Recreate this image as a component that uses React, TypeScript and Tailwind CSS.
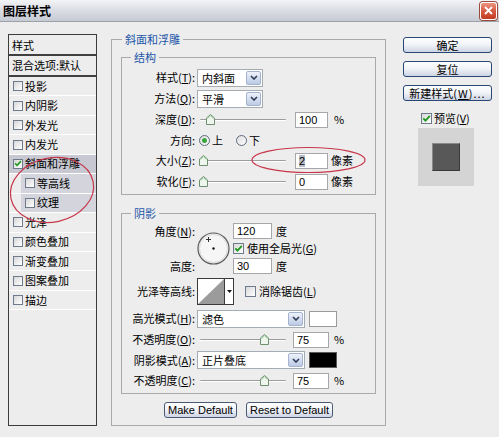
import React from 'react';

const U = ({ c }: { c: string }) => <span className="underline">{c}</span>;

const Check = ({ on = false, className = '' }: { on?: boolean; className?: string }) => (
  <span
    className={`inline-flex h-[11px] w-[11px] shrink-0 items-center justify-center border border-[#6d7b8d] bg-gradient-to-br from-[#d8d8d8] to-white ${className}`}
  >
    {on && (
      <svg width="9" height="9" viewBox="0 0 9 9">
        <path d="M1.3 4.3 L3.5 6.6 L7.8 1.8" fill="none" stroke="#1f9a1f" strokeWidth="1.8" />
      </svg>
    )}
  </span>
);

const Radio = ({ on = false }: { on?: boolean }) => (
  <span className="inline-flex h-[11px] w-[11px] shrink-0 items-center justify-center rounded-full border border-[#5d6b7d] bg-gradient-to-br from-[#dcdcdc] to-white">
    {on && <span className="h-[5px] w-[5px] rounded-full bg-[#3aa53a]" />}
  </span>
);

const Select = ({ w, value }: { w: string; value: string }) => (
  <div className={`flex h-[18px] border border-[#a5acb2] bg-white ${w}`}>
    <div className="flex-1 pl-[4px] leading-[16px]">{value}</div>
    <div className="m-[1px] flex w-[15px] items-center justify-center rounded-[2px] border border-[#a3b3d0] bg-gradient-to-b from-[#eef2fa] to-[#bccae4]">
      <svg width="8" height="5" viewBox="0 0 8 5">
        <path d="M1 1 L4 4 L7 1" fill="none" stroke="#2d3b55" strokeWidth="1.6" />
      </svg>
    </div>
  </div>
);

const Field = ({ w = 'w-[33px]', className = '', children }: { w?: string; className?: string; children: React.ReactNode }) => (
  <div
    className={`h-[16px] border border-[#a7a6aa] bg-white pl-[3px] font-['Liberation_Sans',sans-serif] text-[11px] leading-[14px] ${w} ${className}`}
  >
    {children}
  </div>
);

// thumb positions are passed as complete class names
const Slider = ({ thumb }: { thumb: string }) => (
  <div className="relative ml-[3px] h-[12px] w-[86px]">
    <div className="mt-[5px] h-[2px] rounded-full border-t border-b border-t-[#9c9c9c] border-b-white" />
    <svg className={`absolute top-0 ${thumb}`} width="9" height="11" viewBox="0 0 9 11">
      <path d="M0.5 4 L4.5 0.5 L8.5 4 V10.5 H0.5 Z" fill="#eef6ee" stroke="#6f8f70" strokeWidth="1" />
      <path d="M1.5 4.5 L4.5 1.8 L7.5 4.5" fill="none" stroke="#9ccf9c" strokeWidth="1" />
    </svg>
  </div>
);

const Row = ({ label, h = 'h-[21px]', children }: { label: React.ReactNode; h?: string; children?: React.ReactNode }) => (
  <div className={`flex items-center ${h}`}>
    <div className="w-[73px] shrink-0 text-right">{label}</div>
    <div className="ml-[2px] flex items-center">{children}</div>
  </div>
);

const Btn = ({ className = '', children }: { className?: string; children: React.ReactNode }) => (
  <div
    className={`h-[16px] rounded-[3px] border border-[#284772] bg-gradient-to-b from-white via-[#f0f2f7] to-[#cdd4e4] text-center leading-[14px] ${className}`}
  >
    {children}
  </div>
);

const sideItems = ['投影', '内阴影', '外发光', '内发光'];
const sideRest = ['光泽', '颜色叠加', '渐变叠加', '图案叠加', '描边'];

const SideRow = ({ label, on = false, sub = false, active = false }: { label: string; on?: boolean; sub?: boolean; active?: boolean }) => (
  <div className={`flex h-[19.45px] border-b border-white ${active ? 'bg-[#c7c8d2]' : ''}`}>
    <div className={`flex flex-1 items-center ${sub ? 'ml-[12px] bg-[#d3d4dc] pl-[4px]' : 'pl-[4px]'}`}>
      <Check on={on} className="!h-[10px] !w-[10px]" />
      <span className="ml-[2px] leading-none">{label}</span>
    </div>
  </div>
);

export default function App() {
  return (
    <div className="relative h-[437px] w-[499px] overflow-hidden bg-[#ededed] font-['Noto_Sans_CJK_SC',sans-serif] text-[11px] text-black">
      {/* title bar */}
      <div className="flex h-[22px] items-center justify-between border-b border-[#9da1aa] bg-gradient-to-b from-[#f3f4f7] via-[#dadde4] to-[#c6cad3] pl-[3px] pr-[2px]">
        <span className="text-[12px] font-bold">图层样式</span>
        <div className="flex h-[18px] w-[17px] items-center justify-center rounded-[3px] border border-white bg-gradient-to-b from-[#eb9480] via-[#d85a42] to-[#c13a22] shadow-[0_0_0_1px_#9a4a3c]">
          <svg width="9" height="9" viewBox="0 0 9 9">
            <path d="M1 1 L8 8 M8 1 L1 8" stroke="white" strokeWidth="1.8" />
          </svg>
        </div>
      </div>

      <div className="flex">
        {/* style list */}
        <div className="ml-[8px] mt-[12px] h-[392px] w-[89px] border border-[#3c3c3c] bg-[#ededed]">
          <div className="h-[21px] border-b-2 border-[#404040] pl-[3px] leading-[20px]">样式</div>
          <div className="h-[21px] border-b-2 border-[#404040] pl-[3px] leading-[19px]">混合选项:默认</div>
          {sideItems.map((s) => (
            <SideRow key={s} label={s} />
          ))}
          <SideRow label="斜面和浮雕" on active />
          <SideRow label="等高线" sub />
          <SideRow label="纹理" sub />
          {sideRest.map((s) => (
            <SideRow key={s} label={s} />
          ))}
        </div>

        {/* bevel and emboss */}
        <fieldset className="ml-[14px] mt-[9px] w-[275px] border border-[#a9a9a9] px-[9px] pb-[6px]">
          <legend className="ml-[1px] px-[3px] leading-[16px] text-[#2457a8]">斜面和浮雕</legend>

          <fieldset className="mt-[2px] border border-[#a9a9a9] pb-[2px] pt-[2px]">
            <legend className="ml-[9px] px-[3px] leading-[16px] text-[#2457a8]">结构</legend>
            <Row label={<>样式(<U c="T" />):</>}>
              <Select w="w-[66px]" value="内斜面" />
            </Row>
            <Row label={<>方法(<U c="Q" />):</>}>
              <Select w="w-[66px]" value="平滑" />
            </Row>
            <Row label={<>深度(<U c="D" />):</>}>
              <Slider thumb="left-[6px]" />
              <Field className="ml-[9px]">100</Field>
              <span className="ml-[6px]">%</span>
            </Row>
            <Row h="h-[20px]" label="方向:">
              <span className="ml-[2px] flex items-center">
                <Radio on />
                <span className="ml-[2px]">上</span>
              </span>
              <span className="ml-[13px] flex items-center">
                <Radio />
                <span className="ml-[2px]">下</span>
              </span>
            </Row>
            <Row label={<>大小(<U c="Z" />):</>}>
              <Slider thumb="left-[-1px]" />
              <Field className="ml-[9px]">
                <span className="bg-[#b9bdc7]">2</span>
              </Field>
              <span className="ml-[3px]">像素</span>
            </Row>
            <Row label={<>软化(<U c="F" />):</>}>
              <Slider thumb="left-[-1px]" />
              <Field className="ml-[9px]">0</Field>
              <span className="ml-[3px]">像素</span>
            </Row>
          </fieldset>

          <fieldset className="mt-[10px] border border-[#a9a9a9] pb-[2px] pt-[1px]">
            <legend className="ml-[9px] px-[3px] leading-[16px] text-[#2457a8]">阴影</legend>
            <div className="flex">
              <div className="w-[73px] shrink-0">
                <div className="flex h-[18px] items-center justify-end">
                  角度(<U c="N" />):
                </div>
                <div className="h-[17px]" />
                <div className="flex h-[18px] items-center justify-end">高度:</div>
              </div>
              <div className="ml-[2px] pt-[10px]">
                <svg width="33" height="33" viewBox="0 0 33 33">
                  <circle cx="16.5" cy="16.5" r="15.5" fill="#f6f6f6" stroke="#5a5a5a" strokeWidth="1.2" />
                  <circle cx="16.5" cy="16.5" r="14" fill="none" stroke="#d8d8d8" strokeWidth="1" />
                  <circle cx="16.5" cy="16.5" r="1.2" fill="#111" />
                  <path d="M9 7.5 H14 M11.5 5 V10" stroke="#333" strokeWidth="1" />
                </svg>
              </div>
              <div className="ml-[3px]">
                <div className="flex h-[18px] items-center">
                  <Field w="w-[39px]">120</Field>
                  <span className="ml-[4px]">度</span>
                </div>
                <div className="flex h-[17px] items-center">
                  <Check on />
                  <span className="ml-[3px]">
                    使用全局光(<U c="G" />)
                  </span>
                </div>
                <div className="flex h-[18px] items-center">
                  <Field w="w-[39px]">30</Field>
                  <span className="ml-[4px]">度</span>
                </div>
              </div>
            </div>
            <Row h="my-[3px] h-[27px]" label="光泽等高线:">
              <div className="flex h-[27px] w-[37px] border border-[#3a3a3a] bg-white">
                <svg width="26" height="25" viewBox="0 0 26 25">
                  <polygon points="0,25 26,0 26,25" fill="#9b9b9b" />
                </svg>
                <div className="flex w-[9px] items-center justify-center border-l border-[#3a3a3a]">
                  <svg width="5" height="3" viewBox="0 0 5 3">
                    <polygon points="0,0 5,0 2.5,3" fill="#111" />
                  </svg>
                </div>
              </div>
              <Check className="ml-[11px]" />
              <span className="ml-[3px]">
                消除锯齿(<U c="L" />)
              </span>
            </Row>
            <Row label={<>高光模式(<U c="H" />):</>}>
              <Select w="w-[108px]" value="滤色" />
              <span className="ml-[4px] h-[16px] w-[28px] border border-[#9a9a9a] bg-white" />
            </Row>
            <Row label={<>不透明度(<U c="O" />):</>}>
              <Slider thumb="left-[60px]" />
              <Field w="w-[36px]" className="ml-[7px]">75</Field>
              <span className="ml-[5px]">%</span>
            </Row>
            <Row h="h-[20px]" label={<>阴影模式(<U c="A" />):</>}>
              <Select w="w-[108px]" value="正片叠底" />
              <span className="ml-[4px] h-[16px] w-[28px] border border-[#5a5a5a] bg-black" />
            </Row>
            <Row label={<>不透明度(<U c="C" />):</>}>
              <Slider thumb="left-[60px]" />
              <Field w="w-[36px]" className="ml-[7px]">75</Field>
              <span className="ml-[5px]">%</span>
            </Row>
          </fieldset>

          <div className="mt-[8px] flex justify-center gap-[9px] font-['Liberation_Sans',sans-serif] text-[11px]">
            <Btn className="w-[73px] !border-[#4a5a74]">Make Default</Btn>
            <Btn className="w-[87px] !border-[#4a5a74]">Reset to Default</Btn>
          </div>
        </fieldset>

        {/* buttons */}
        <div className="ml-[17px] mt-[15px] flex w-[89px] flex-col">
          <Btn>确定</Btn>
          <Btn className="mt-[8px]">复位</Btn>
          <Btn className="mt-[8px]">
            新建样式<span className="tracking-[1px]">(<U c="W" />)...</span>
          </Btn>
          <div className="mt-[10px] flex h-[14px] items-center pl-[18px]">
            <Check on />
            <span className="ml-[2px]">
              预览(<U c="V" />)
            </span>
          </div>
          <div className="ml-[15px] mt-[3px] flex h-[58px] w-[56px] items-center justify-center bg-[#d4d4d4]">
            <div className="h-[28px] w-[28px] border border-t-[#8a8a8a] border-l-[#8a8a8a] border-b-[#383838] border-r-[#383838] bg-[#585858]" />
          </div>
        </div>
      </div>

      {/* red annotation marks */}
      <svg className="pointer-events-none absolute left-0 top-0" width="499" height="437">
        <ellipse cx="52" cy="190" rx="42" ry="32" fill="none" stroke="#c8364a" strokeWidth="1.2" transform="rotate(-12 52 190)" />
        <ellipse cx="308.5" cy="160" rx="56.5" ry="12.5" fill="none" stroke="#c8364a" strokeWidth="1.2" />
      </svg>
    </div>
  );
}
